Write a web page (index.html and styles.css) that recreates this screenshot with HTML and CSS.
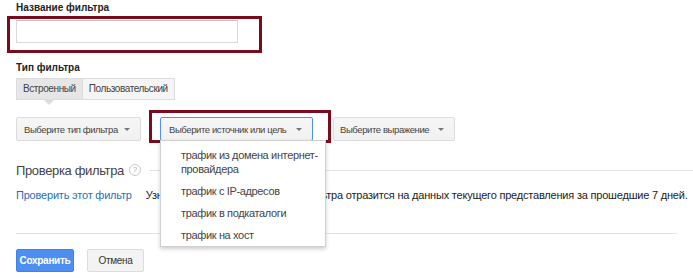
FILE: index.html
```html
<!DOCTYPE html>
<html lang="ru">
<head>
    <meta charset="utf-8">
    <title>Фильтр</title>
    <link rel="stylesheet" href="styles.css">
</head>
<body>
    <div class="page">

        <label class="field-label">Название фильтра</label>
        <div class="mark mark-name">
            <input type="text" class="name-input">
        </div>

        <label class="field-label type-label">Тип фильтра</label>
        <div class="tabs">
            <span class="tab tab-active">Встроенный</span>
            <span class="tab">Пользовательский</span>
        </div>

        <div class="selects">
            <button class="select select-type">Выберите тип фильтра <i class="caret"></i></button>
            <div class="mark mark-source">
                <button class="select select-source">Выберите источник или цель <i class="caret"></i></button>
                <ul class="menu">
                    <li>трафик из домена интернет-провайдера</li>
                    <li>трафик с IP-адресов</li>
                    <li>трафик в подкаталоги</li>
                    <li>трафик на хост</li>
                </ul>
            </div>
            <button class="select select-expr">Выберите выражение <i class="caret"></i></button>
        </div>

        <div class="check-head">
            <h2>Проверка фильтра</h2>
            <span class="help">?</span>
            <span class="rule"></span>
        </div>
        <div class="check-row">
            <a href="#" class="check-link">Проверить этот фильтр</a>
            <span class="check-text">Узнайте, как применение этого фильтра отразится на данных текущего представления за прошедшие 7 дней.</span>
        </div>

        <hr class="divider">

        <div class="actions">
            <button class="btn btn-save">Сохранить</button>
            <button class="btn btn-cancel">Отмена</button>
        </div>

    </div>
</body>
</html>
```

FILE: styles.css
```css
body {
    margin: 0;
    font-family: Arial, "Liberation Sans", sans-serif;
    font-size: 11px;
    color: #222;
    background: #fff;
    overflow: hidden;
}

.page {
    padding: 0 16px;
}

.field-label {
    display: block;
    font-size: 10px;
    font-weight: bold;
    line-height: 16px;
    margin-bottom: 4px;
    color: #222;
}

.type-label {
    margin-top: 17px;
    margin-bottom: 2px;
}

/* red annotation frames */
.mark {
    position: relative;
}

.mark::after {
    content: "";
    position: absolute;
    border: 3px solid #7b0a1c;
    pointer-events: none;
}

.mark-name {
    width: 222px;
}

.mark-name::after {
    top: -4px;
    left: -9px;
    right: -24px;
    bottom: -10px;
}

.mark-source::after {
    top: -7px;
    left: -11px;
    right: -18px;
    bottom: -2px;
}

.name-input {
    display: block;
    width: 222px;
    height: 23px;
    border: 1px solid #d9d9d9;
    border-top-color: #c0c0c0;
    box-sizing: border-box;
    margin: 0;
}

.tabs {
    display: flex;
    position: relative;
    width: max-content;
}

.tab {
    height: 22px;
    line-height: 20px;
    padding: 0 6px;
    box-sizing: border-box;
    border: 1px solid #dcdcdc;
    background: #f5f5f5;
    color: #444;
    font-size: 10px;
    letter-spacing: -0.4px;
    white-space: nowrap;
}

.tab + .tab {
    border-left: none;
}

.tab-active {
    background: #e6e6e6;
    position: relative;
}

.tab-active::after {
    content: "";
    position: absolute;
    left: 50%;
    bottom: -6px;
    margin-left: -6px;
    border-left: 6px solid transparent;
    border-right: 6px solid transparent;
    border-top: 6px solid #dcdcdc;
}

.selects {
    display: flex;
    align-items: flex-start;
    gap: 19px;
    margin-top: 17px;
}

.select {
    display: flex;
    align-items: center;
    height: 24px;
    padding: 0 7px;
    border: 1px solid #dcdcdc;
    border-radius: 2px;
    background: linear-gradient(#f6f6f6, #f1f1f1);
    font-family: inherit;
    font-size: 9.5px;
    letter-spacing: -0.4px;
    white-space: nowrap;
    color: #444;
    box-sizing: border-box;
}

.select-type {
    width: 125px;
}

.select-source {
    width: 153px;
    border-color: #4d90fe;
    padding-left: 8px;
}

.select-expr {
    width: 122px;
    margin-left: 1px;
    padding-left: 6px;
}

.caret {
    margin-left: auto;
    width: 0;
    height: 0;
    border-left: 3px solid transparent;
    border-right: 3px solid transparent;
    border-top: 3px solid #777;
    margin-right: 3px;
}

.menu {
    position: absolute;
    top: 23px;
    left: 0;
    width: 166px;
    margin: 0;
    padding: 3px 0 0;
    list-style: none;
    background: #fff;
    border: 1px solid #d0d0d0;
    box-shadow: 0 2px 4px rgba(0, 0, 0, 0.2);
    box-sizing: border-box;
    z-index: 2;
}

.menu li {
    padding: 4px 4px 4px 20px;
    line-height: 14px;
    color: #444;
    letter-spacing: -0.35px;
}

.check-head {
    display: flex;
    align-items: center;
    margin-top: 20px;
    margin-right: -16px;
    height: 18px;
}

.check-head h2 {
    margin: 0;
    font-family: Arial, "Liberation Sans", sans-serif;
    font-size: 13px;
    letter-spacing: -0.35px;
    font-weight: normal;
    color: #444;
}

.help {
    width: 10px;
    height: 10px;
    margin-left: 5px;
    border: 1px solid #ccc;
    border-radius: 50%;
    font-size: 8px;
    line-height: 10px;
    text-align: center;
    color: #aaa;
}

.rule {
    flex: 1;
    height: 1px;
    margin-left: 8px;
    background: #e3e3e3;
}

.check-row {
    display: flex;
    gap: 14px;
    margin-top: 8px;
    margin-right: -16px;
    line-height: 16px;
    white-space: nowrap;
    letter-spacing: -0.2px;
}

.check-link {
    color: #1f6fb9;
    text-decoration: none;
}

.divider {
    margin: 30px 0 0;
    border: none;
    border-top: 1px solid #e3e3e3;
}

.actions {
    display: flex;
    gap: 13px;
    margin-top: 15px;
}

.btn {
    height: 23px;
    padding: 0 2px;
    border-radius: 2px;
    font-family: inherit;
    font-size: 10px;
    letter-spacing: -0.3px;
    box-sizing: border-box;
}

.btn-save {
    width: 58px;
    background: #4d8ff0;
    border: 1px solid #3f82ea;
    color: #fff;
    font-weight: bold;
}

.btn-cancel {
    width: 57px;
    background: #f3f3f3;
    border: 1px solid #dcdcdc;
    color: #333;
}
```
